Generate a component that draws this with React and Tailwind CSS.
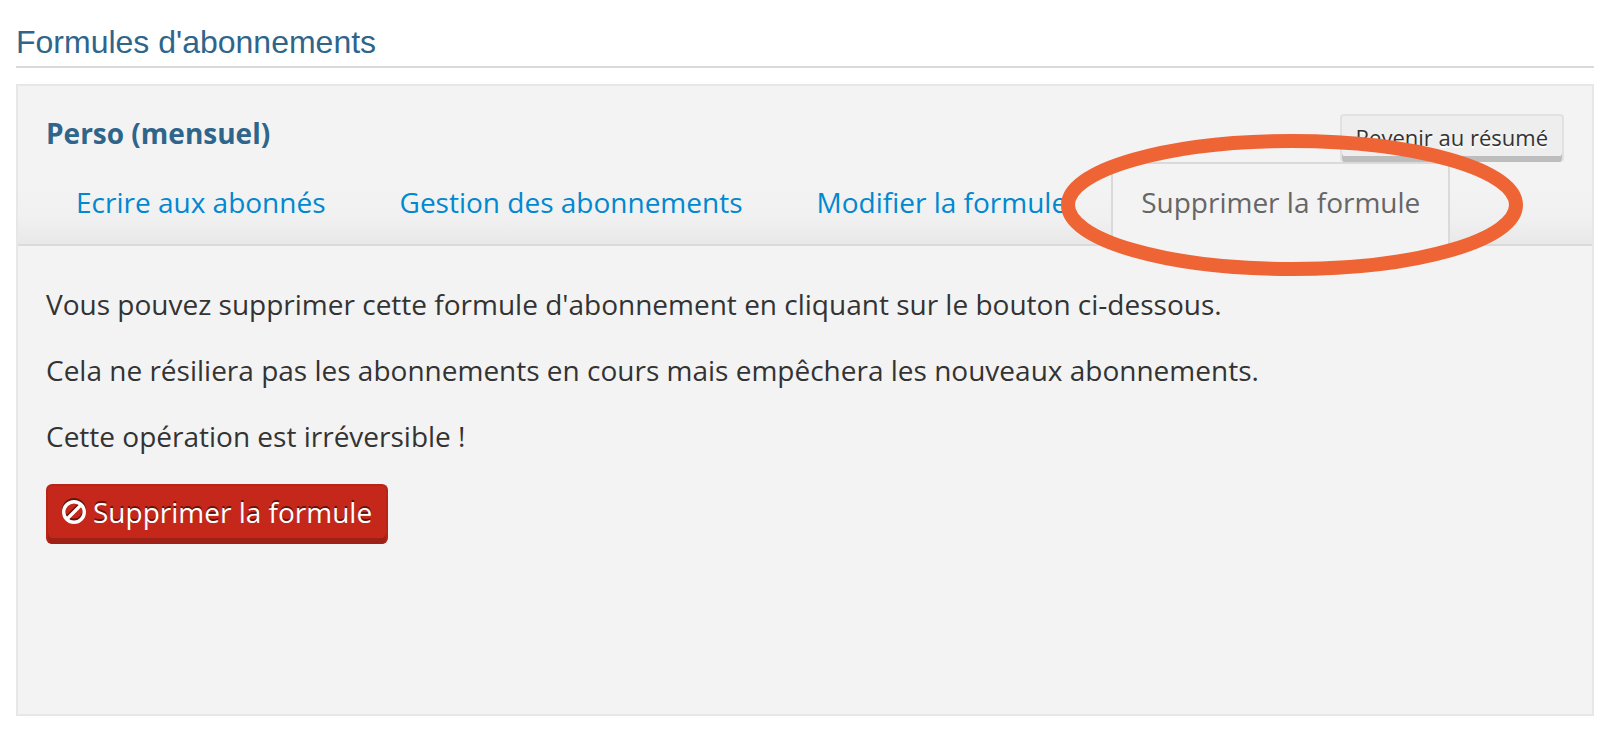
import React, { useState } from "react";

const tabs = [
  "Ecrire aux abonnés",
  "Gestion des abonnements",
  "Modifier la formule",
  "Supprimer la formule",
];

function BanIcon() {
  return (
    <svg
      viewBox="0 0 24 24"
      className="size-6 shrink-0 drop-shadow-[0_-2px_0_rgba(0,0,0,0.5)]"
      fill="none"
      stroke="currentColor"
      strokeWidth="3.4"
      aria-hidden="true"
    >
      <circle cx="12" cy="12" r="10.3" />
      <path d="M4.9 19.1 19.1 4.9" />
    </svg>
  );
}

function Highlight() {
  return (
    <svg
      viewBox="0 0 462 142"
      className="pointer-events-none absolute -top-7 -left-[50px] z-10 h-[142px] w-[462px] max-w-none"
      fill="none"
      aria-hidden="true"
    >
      <ellipse cx="231" cy="71" rx="224" ry="64" stroke="#ee6434" strokeWidth="14" />
    </svg>
  );
}

function Tab({ label, active, marked, onSelect }) {
  return (
    <div className="relative">
      <button
        type="button"
        role="tab"
        aria-selected={active}
        onClick={onSelect}
        className={
          active
            ? "h-[84px] cursor-pointer border-2 border-b-0 border-[#dadada] bg-[#f3f3f3] px-7 pb-1.5 text-[#666666]"
            : "h-[84px] cursor-pointer border-2 border-b-0 border-transparent px-7 pb-1.5 text-[#0088d0]"
        }
      >
        {label}
      </button>
      {marked && <Highlight />}
    </div>
  );
}

export default function App() {
  const [current, setCurrent] = useState(3);
  return (
    <main className="bg-white pt-[22px] pr-[22px] pb-4 pl-4 font-['Open_Sans',sans-serif] text-[28px] leading-9 text-[#333333]">
      <h1 className="border-b-2 border-[#dadada] pb-1 font-['Liberation_Sans',sans-serif] text-[32px] leading-10 text-[#2f658b]">
        Formules d'abonnements
      </h1>
      <section className="mt-4 border-2 border-[#e7e7e7] bg-[#f3f3f3]">
        <header className="border-b-2 border-[#dadada] bg-linear-to-b from-[#f3f3f3] from-65% via-[#f0f0f0] via-85% to-[#e8e8e8] px-7 pt-7">
          <div className="flex items-start justify-between">
            <h2 className="font-bold leading-[38px] text-[#2f658b]">Perso (mensuel)</h2>
            <button
              type="button"
              className="h-12 cursor-pointer rounded border-2 border-b-0 border-[#e1e1e1] bg-[#eeeeee] px-3.5 pb-1 text-[22px] leading-8 shadow-[inset_0_-6px_0_#bdbdbd] text-shadow-[0_2px_0_#ffffff]"
            >
              Revenir au résumé
            </button>
          </div>
          <div role="tablist" className="-mb-0.5 flex flex-wrap gap-3.5">
            {tabs.map((label, i) => (
              <Tab
                key={label}
                label={label}
                active={i === current}
                marked={i === 3}
                onSelect={() => setCurrent(i)}
              />
            ))}
          </div>
        </header>
        <div className="flex min-h-[468px] flex-col items-start gap-[30px] px-7 pt-10">
          <p>Vous pouvez supprimer cette formule d'abonnement en cliquant sur le bouton ci-dessous.</p>
          <p>Cela ne résiliera pas les abonnements en cours mais empêchera les nouveaux abonnements.</p>
          <p>Cette opération est irréversible !</p>
          <button
            type="button"
            className="flex h-[60px] cursor-pointer items-center gap-[7px] rounded-md border-2 border-b-0 border-[#b72519] bg-[#c5281b] px-3.5 pb-1.5 text-white shadow-[inset_0_-6px_0_#9e2016] text-shadow-[0_-2px_0_rgba(0,0,0,0.5)]"
          >
            <BanIcon />
            Supprimer la formule
          </button>
        </div>
      </section>
    </main>
  );
}
